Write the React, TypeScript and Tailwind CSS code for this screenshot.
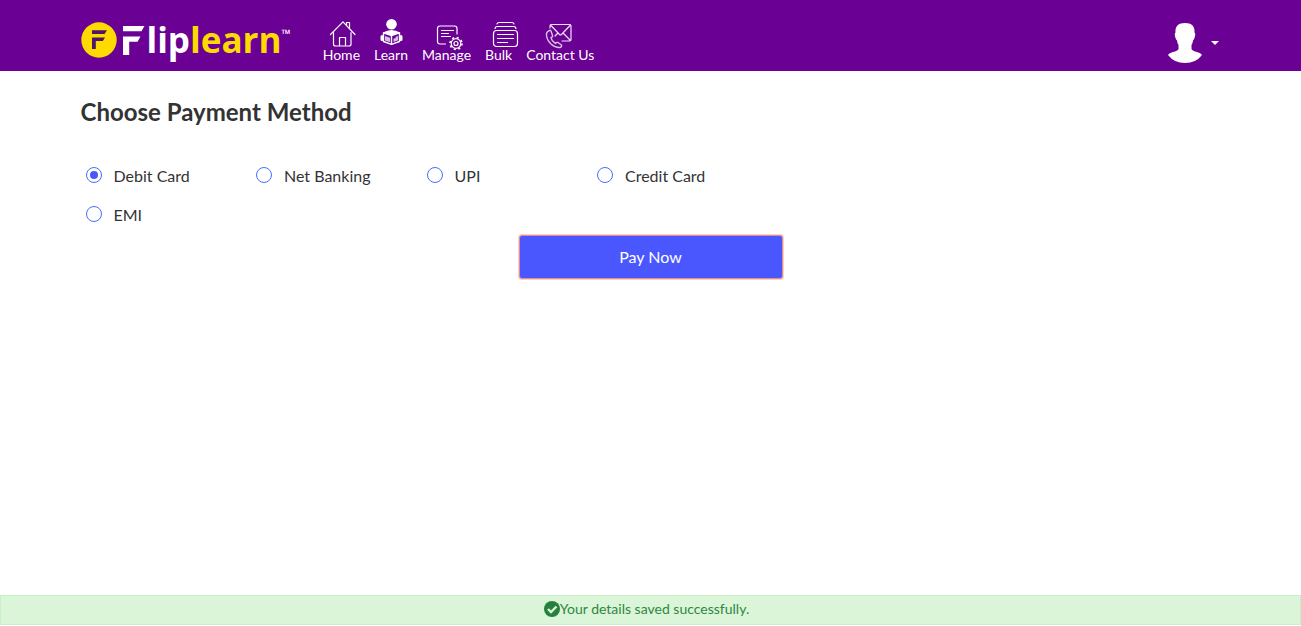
import { useState } from "react";
import type { ReactNode } from "react";

const iconClass = "h-7 w-[26px] shrink-0 overflow-visible";

function Icon({ children }: { children: ReactNode }) {
  return (
    <svg
      className={iconClass}
      viewBox="0 0 26 28"
      fill="none"
      stroke="white"
      strokeWidth="1.2"
      strokeLinecap="round"
      strokeLinejoin="round"
      aria-hidden="true"
    >
      {children}
    </svg>
  );
}

const HomeIcon = () => (
  <Icon>
    <path d="M2.500 16.500 15 3.800 27 16.500M5.500 14.500V26q0 2 2 2H21q2 0 2-2V14.500M11.500 28v-8.500h6V28M18.500 7V4.500h3v5.500" />
  </Icon>
);

const LearnIcon = () => (
  <Icon>
    <circle cx="13.500" cy="6.200" r="5.300" fill="white" stroke="none" />
    <path d="M5 14.400q8.500-5 17 0l-8.500 2.800Z" fill="white" stroke="none" />
    <path d="M4 18.500v3M23 18.500v3" strokeWidth="3" />
    <path d="M13.500 17.500 5.500 14.800v8.700l8 2.900 8-2.900v-8.700Z" fill="#6a0094" strokeWidth="1.400" />
    <path d="M13.500 17.500v8.700" strokeWidth="1.400" />
    <path d="m7 18 5 1.700v4.500l-5-1.700Z" fill="#d5bfe6" stroke="none" />
    <path d="m15.500 20.800 2.200-.8v-1.300l2.300-.7v4.300l-4.500 1.700Z" fill="#d5bfe6" stroke="none" />
  </Icon>
);

const ManageIcon = () => (
  <Icon>
    <path d="M11.500 26H6q-2.500 0-2.500-2.500V10.500Q3.500 8 6 8h14.500q2.500 0 2.500 2.500V16M7.500 12.500h12M7.500 15.500h7M7.500 18.500h9" />
    <circle cx="22" cy="25.500" r="4.800" />
    <circle cx="22" cy="25.500" r="2" />
    <circle cx="22" cy="25.500" r="6" strokeWidth="1.600" strokeDasharray="2.100 2.612" strokeLinecap="butt" />
  </Icon>
);

const BulkIcon = () => (
  <Icon>
    <rect x="7.500" y="12.500" width="24" height="16" rx="3" />
    <path d="M9 10.500q.5-2 2-2h17q1.500 0 2 2M11 6q.5-1.500 2-1.500h13q1.500 0 2 1.500M11.500 16.500h16M11.500 20.500h16M11.500 24.500h10" />
  </Icon>
);

const ContactIcon = () => (
  <Icon>
    <path d="M3 10V8q0-1.500 1.500-1.500h18Q24 6.500 24 8v13.500q0 1.500-1.500 1.500H15M3.500 7l9 9.500q1 1 2 0l9-9.500M16 15l7.500 7.500M11 15l-3 3" stroke="#efe3f5" />
    <path d="M2.500 12.500Q0 13.500-.5 15.500-1 21 4 26q4.500 4 9 3.500 2-.5 1.500-2.500l-3.500-2.500q-1.500-.5-2.500 1-4-2.500-4.500-6 2-.5 1.500-2L4 13q-.5-1-1.500-.5Z" strokeWidth="1.400" stroke="#d9bfe6" />
  </Icon>
);

const navItems = [
  { label: "Home", icon: <HomeIcon /> },
  { label: "Learn", icon: <LearnIcon /> },
  { label: "Manage", icon: <ManageIcon /> },
  { label: "Bulk", icon: <BulkIcon /> },
  { label: "Contact Us", icon: <ContactIcon /> },
];

function Logo() {
  return (
    <a
      href="#"
      aria-label="Fliplearn"
      className="flex items-start font-['Open_Sans',sans-serif] text-[35px] leading-10 font-bold"
    >
      <svg viewBox="0 0 65 40" className="h-10 w-[65px]" aria-hidden="true">
        <circle cx="18" cy="20" r="17.700" fill="#ffda00" />
        <path d="M11 10.200h15l-2.500 3.800H11ZM11 17.500h13l-2.200 3.500H14.800v8H11Z" fill="#4b1768" />
        <path d="M42 6h21.500l-3 5.300H42ZM42 16.500h17.500l-3 5.300H48.200V35H42Z" fill="white" />
      </svg>
      <span className="pl-px text-white">lip</span>
      <span className="text-[#ffda00]">learn</span>
      <span className="pt-2 text-xs leading-3 text-white">™</span>
    </a>
  );
}

function Header() {
  return (
    <header className="bg-[#6a0094] text-white">
      <div className="mx-auto flex h-[71px] max-w-[1140px] items-start justify-between">
        <div className="flex items-start gap-8">
          <div className="pt-5">
            <Logo />
          </div>
          <nav className="flex gap-[14px] pt-[18px]">
            {navItems.map((item) => (
              <a key={item.label} href="#" className="flex flex-col items-center text-sm leading-[18px]">
                {item.icon}
                {item.label}
              </a>
            ))}
          </nav>
        </div>
        <button type="button" aria-label="Account menu" className="flex items-center gap-2 pt-[22px] pr-0.5">
          <svg viewBox="0 0 36 42" className="h-[42px] w-9" fill="white" aria-hidden="true">
            <path d="M18 1C11.500 1 8 4 8.500 10.500q-1.500 1 0 5.500.6 1.500 1.500 2.500.3 3 1.500 4.500v4Q10.500 29 6 30 2 31 1 33q6 8 17 8t17-8q-1-2-5-3-4.500-1-5.500-3v-4q1.200-1.500 1.500-4.500.9-1 1.500-2.500 1.500-4.500 0-5.500C28 4 24.500 1 18 1Z" />
          </svg>
          <svg viewBox="0 0 8 4" className="h-1 w-2" fill="white" aria-hidden="true">
            <path d="M0 0h8L4 4Z" />
          </svg>
        </button>
      </div>
    </header>
  );
}

const methods = ["Debit Card", "Net Banking", "UPI", "Credit Card", "EMI"];

export default function App() {
  const [method, setMethod] = useState("Debit Card");

  return (
    <div className="flex min-h-screen flex-col bg-white font-[Lato,sans-serif] text-[#333333]">
      <Header />
      <main className="mx-auto w-full max-w-[1140px] flex-1 pt-[23px]">
        <h1 className="text-2xl leading-9 font-bold">Choose Payment Method</h1>
        <fieldset aria-label="Payment method" className="grid max-w-[682px] grid-cols-4 gap-y-[15px] pt-[34px]">
          {methods.map((name) => (
            <label key={name} className="flex items-start gap-3 pl-[5px] text-base leading-6">
              <input
                type="radio"
                name="method"
                value={name}
                checked={method === name}
                onChange={() => setMethod(name)}
                className="mt-[3px] size-4 appearance-none rounded-full border border-[#4a6cff] bg-white bg-clip-content p-[3px] checked:bg-[#4a57ff]"
              />
              {name}
            </label>
          ))}
        </fieldset>
        <div className="flex justify-center pt-2">
          <button
            type="button"
            className="h-11 w-[264px] rounded-[3px] border border-[#dc8d9e] bg-[#4a57ff] text-base text-white ring-1 ring-[#fbd3bd]"
          >
            Pay Now
          </button>
        </div>
      </main>
      <div
        role="status"
        className="mb-px flex h-[30px] items-center justify-center border border-[#c9efc5] bg-[#daf5d7] pr-2 pb-0.5 text-sm text-[#2f8745]"
      >
        <svg viewBox="0 0 16 16" className="size-4" aria-hidden="true">
          <circle cx="8" cy="8" r="8" fill="#27803d" />
          <path d="m4 8 3 3 5.500-5.500" fill="none" stroke="#daf5d7" strokeWidth="2.400" />
        </svg>
        Your details saved successfully.
      </div>
    </div>
  );
}
